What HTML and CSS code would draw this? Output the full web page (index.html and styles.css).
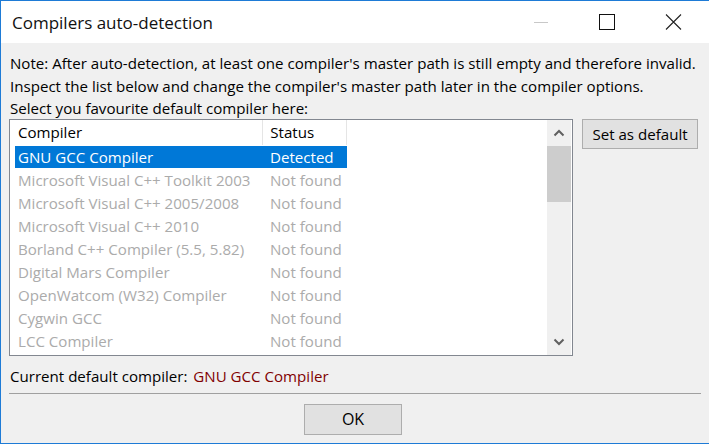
FILE: index.html
```html
<!DOCTYPE html>
<html lang="en">
<head>
    <meta charset="UTF-8">
    <title>Compilers auto-detection</title>
    <link rel="stylesheet" href="styles.css">
</head>
<body>

    <div class="window">
        <div class="titlebar">
            <span class="title">Compilers auto-detection</span>
            <div class="controls">
                <span class="ctl min"><svg width="16" height="16" viewBox="0 0 16 16"><path d="M1 8.5h14" stroke="#c8c8c8" stroke-width="1"/></svg></span>
                <span class="ctl"><svg width="16" height="16" viewBox="0 0 16 16"><rect x="0.5" y="0.5" width="15" height="15" fill="none" stroke="#111" stroke-width="1"/></svg></span>
                <span class="ctl"><svg width="17" height="16" viewBox="0 0 17 16"><path d="M1 0.5l15 15M16 0.5l-15 15" stroke="#222" stroke-width="1.1"/></svg></span>
            </div>
        </div>

        <div class="content">
            <p class="note">
                Note: After auto-detection, at least one compiler's master path is still empty and therefore invalid.<br>
                Inspect the list below and change the compiler's master path later in the compiler options.<br>
                Select you favourite default compiler here:
            </p>

            <div class="main">
                <div class="listbox">
                    <div class="list">
                        <div class="row head">
                            <span class="col-name">Compiler</span>
                            <span class="col-status">Status</span>
                        </div>
                        <div id="rows"></div>
                    </div>
                    <div class="scrollbar">
                        <div class="arrow"><svg width="12" height="8" viewBox="0 0 12 8"><path d="M1.5 6.5L6 2l4.5 4.5" fill="none" stroke="#606060" stroke-width="2"/></svg></div>
                        <div class="thumb"></div>
                        <div class="track"></div>
                        <div class="arrow"><svg width="12" height="8" viewBox="0 0 12 8"><path d="M1.5 1.5L6 6l4.5-4.5" fill="none" stroke="#606060" stroke-width="2"/></svg></div>
                    </div>
                </div>
                <button class="btn set">Set as default</button>
            </div>

            <div class="current">
                Current default compiler: <span class="current-name">GNU GCC Compiler</span>
            </div>

            <div class="separator"></div>

            <div class="footer">
                <button class="btn ok">OK</button>
            </div>
        </div>
    </div>

    <script>
        // compilers found by the auto-detection
        const compilers = [
            ['GNU GCC Compiler', 'Detected'],
            ['Microsoft Visual C++ Toolkit 2003', 'Not found'],
            ['Microsoft Visual C++ 2005/2008', 'Not found'],
            ['Microsoft Visual C++ 2010', 'Not found'],
            ['Borland C++ Compiler (5.5, 5.82)', 'Not found'],
            ['Digital Mars Compiler', 'Not found'],
            ['OpenWatcom (W32) Compiler', 'Not found'],
            ['Cygwin GCC', 'Not found'],
            ['LCC Compiler', 'Not found']
        ];

        const rows = document.getElementById('rows');
        compilers.forEach((c, i) => {
            const row = document.createElement('div');
            row.className = 'row' + (i === 0 ? ' selected' : ' missing');
            row.innerHTML = `
                <span class="col-name">${c[0]}</span>
                <span class="col-status">${c[1]}</span>
            `;
            rows.appendChild(row);
        });
    </script>

</body>
</html>
```

FILE: styles.css
```css
body {
    margin: 0;
    font-family: 'Open Sans', 'Noto Sans', sans-serif;
    font-size: 15.1px;
    color: #000;
    background: #fff;
    overflow: hidden;
}
.window {
    width: 708px;
    height: 442px;
    border: 1px solid #1e7bd6;
    border-right: none;
    background: #f0f0f0;
}
.titlebar {
    height: 42px;
    background: #fff;
    display: flex;
    align-items: center;
    justify-content: space-between;
}
.title {
    font-size: 17px;
    padding-left: 11px;
    color: #111;
}
.controls {
    display: flex;
    align-items: center;
    gap: 50px;
    padding-right: 27px;
}
.ctl {
    display: flex;
}
.content {
    padding: 9px 0 0 8px;
}
.note {
    margin: 0;
    line-height: 22.5px;
    padding-left: 1px;
    white-space: nowrap;
}
.main {
    display: flex;
    align-items: flex-start;
    gap: 9px;
    margin-top: -1px;
}
.listbox {
    width: 562px;
    height: 235px;
    border: 1px solid #828790;
    background: #fff;
    display: flex;
}
.list {
    flex: 1;
    padding-left: 5px;
}
.row {
    display: flex;
    height: 23px;
    line-height: 22px;
    width: 332px;
}
.row.head {
    height: 25px;
    line-height: 25px;
    margin-bottom: 1px;
}
.col-name {
    width: 245px;
    padding-left: 3px;
    white-space: nowrap;
}
.col-status {
    width: 77px;
    padding-left: 7px;
    white-space: nowrap;
}
.row.head .col-name,
.row.head .col-status {
    border-right: 1px solid #e5e5e5;
}
.row.head .col-status {
    width: 76px;
}
.row.selected {
    background: #0078d7;
    color: #fff;
    height: 22px;
    margin-bottom: 1px;
}
.row.missing {
    color: #ababab;
}
.scrollbar {
    width: 24px;
    margin-right: 1px;
    background: #f0f0f0;
    display: flex;
    flex-direction: column;
}
.arrow {
    height: 26px;
    display: flex;
    align-items: center;
    justify-content: center;
}
.thumb {
    height: 56px;
    background: #cdcdcd;
}
.track {
    flex: 1;
}
.btn {
    font-family: inherit;
    font-size: 15.1px;
    color: #000;
    background: #e1e1e1;
    border: 1px solid #adadad;
    padding: 0;
}
.btn.set {
    width: 116px;
    height: 30px;
}
.current {
    height: 22px;
    line-height: 22px;
    padding: 9px 0 0 1px;
}
.current-name {
    color: #800000;
    padding-left: 2px;
}
.separator {
    height: 1px;
    background: #a0a0a0;
    margin: 6px 8px 0 0;
}
.footer {
    display: flex;
    justify-content: center;
    padding: 10px 0 0 0;
    margin-left: -12px;
}
.btn.ok {
    width: 98px;
    height: 31px;
    font-size: 16px;
}
```
